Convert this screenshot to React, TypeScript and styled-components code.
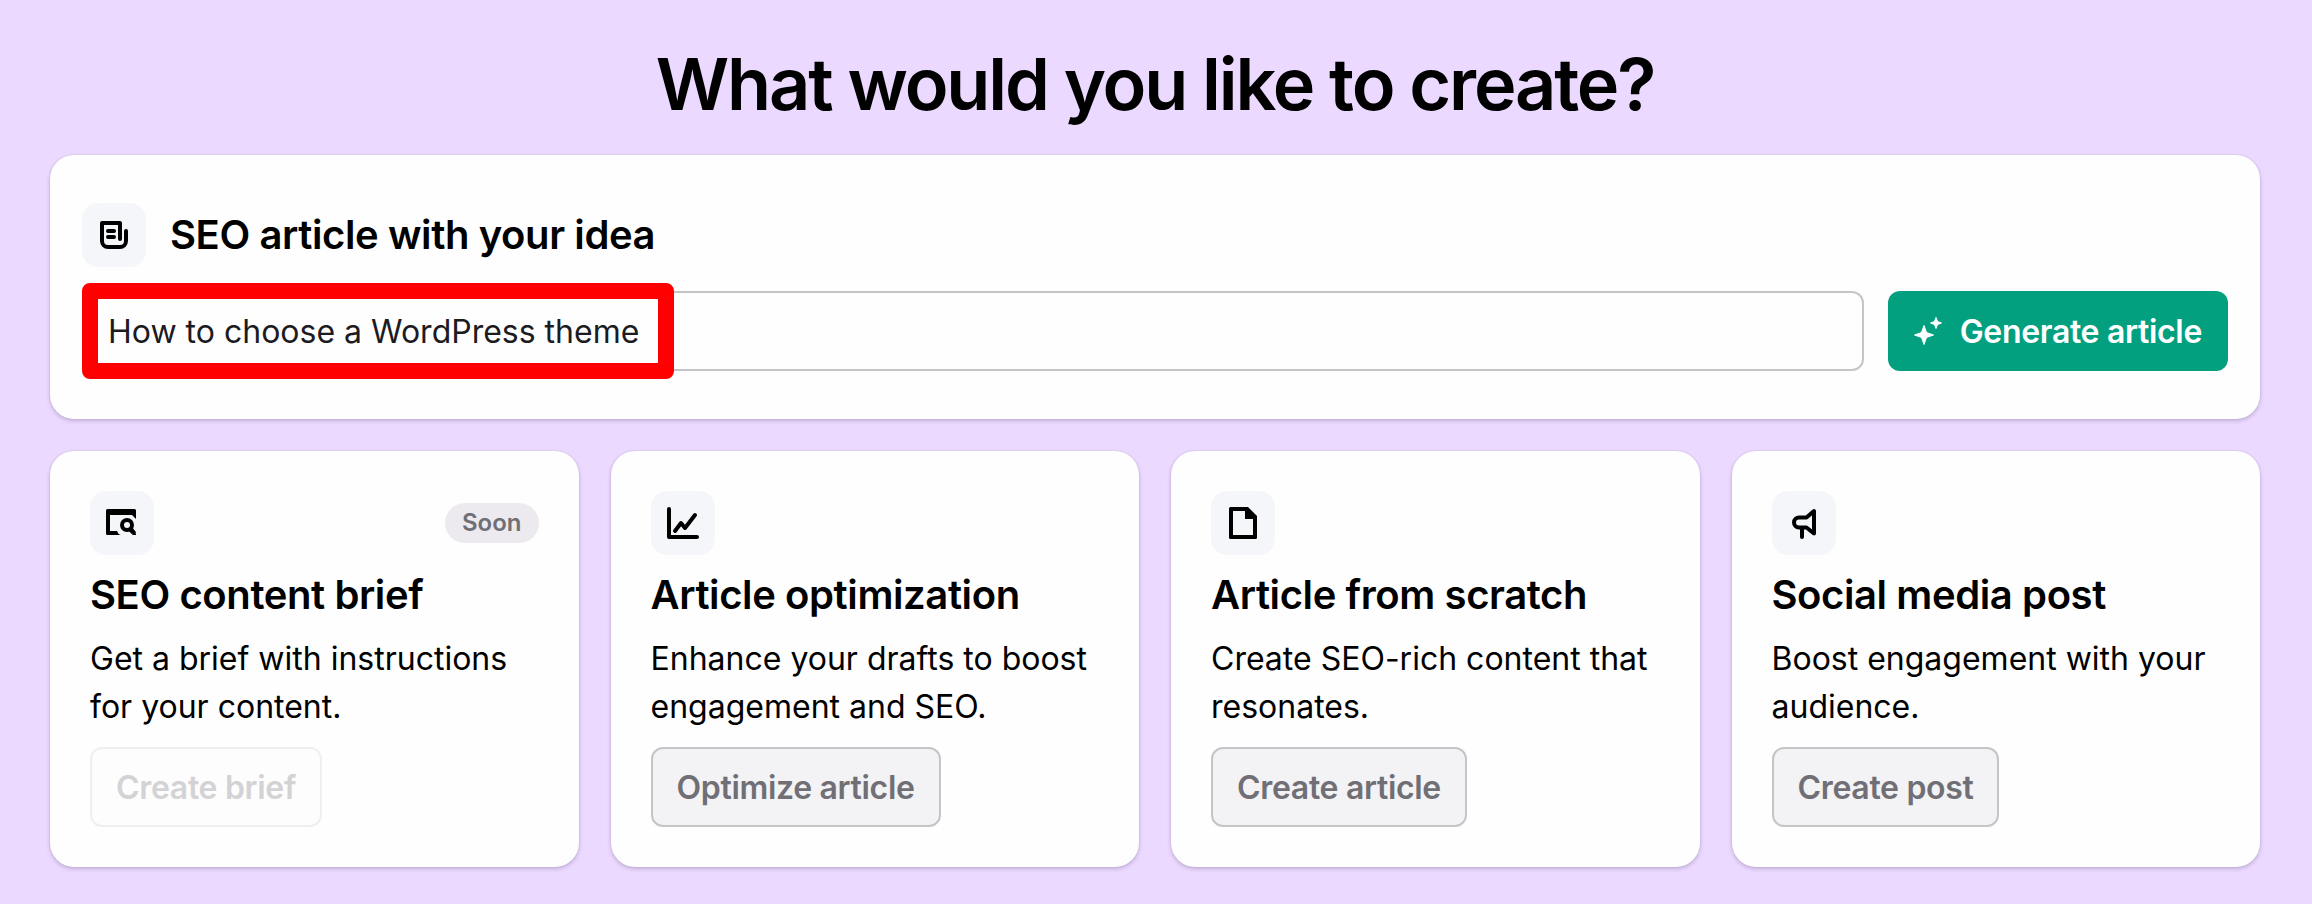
import React from "react";
import styled, { createGlobalStyle } from "styled-components";

const GlobalStyle = createGlobalStyle`
  * { box-sizing: border-box; }
  html { min-height: 100%; background: #ebd9ff; }
  body {
    margin: 0;
    background: #ebd9ff;
    color: #000;
    font-family: Inter, "Liberation Sans", sans-serif;
  }
  button, input { font: inherit; }
`;

const Page = styled.main`
  padding: 40px 52px 36px 50px;
`;

const Heading = styled.h1`
  margin: 0 0 27px;
  font-size: 72px;
  line-height: 88px;
  font-weight: 600;
  letter-spacing: -0.03em;
  text-align: center;
`;

const Card = styled.section`
  background: #fefefe;
  border-radius: 24px;
  box-shadow: 0 2px 4px rgba(40, 20, 60, 0.2), 0 0 2px rgba(40, 20, 60, 0.12);
`;

const IdeaCard = styled(Card)`
  padding: 48px 32px;
  display: flex;
  flex-direction: column;
  gap: 24px;
`;

const IdeaHeader = styled.div`
  display: flex;
  align-items: center;
  gap: 24px;
`;

const IconTile = styled.span`
  display: block;
  width: 64px;
  height: 64px;
  flex: none;
  border-radius: 16px;
  background: #f5f6fa;

  svg { display: block; }
`;

const CardTitle = styled.h2`
  margin: 0;
  font-size: 40px;
  line-height: 48px;
  font-weight: 600;
  letter-spacing: -0.01em;
`;

const IdeaForm = styled.form`
  display: flex;
  gap: 24px;
`;

const IdeaField = styled.div`
  position: relative;
  flex: 1;
`;

const IdeaInput = styled.input`
  display: block;
  width: 100%;
  height: 80px;
  padding: 0 24px;
  border: 2px solid #c5c5c8;
  border-radius: 12px;
  background: #fefefe;
  color: #1c1b1f;
  font-size: 32px;
  outline: none;
`;

const Highlight = styled.span`
  position: absolute;
  top: -8px;
  left: 0;
  width: 592px;
  height: 96px;
  border: 16px solid #ff0000;
  border-radius: 8px;
  pointer-events: none;
`;

const GenerateButton = styled.button`
  display: flex;
  align-items: center;
  gap: 16px;
  height: 80px;
  padding: 0 26px 0 24px;
  border: 0;
  border-radius: 12px;
  background: #02a07f;
  color: #fff;
  font-size: 32px;
  font-weight: 600;
  letter-spacing: -0.01em;
  white-space: nowrap;
`;

const Grid = styled.div`
  display: grid;
  grid-template-columns: repeat(auto-fit, minmax(480px, 1fr));
  gap: 32px;
  margin-top: 32px;
`;

const OptionCard = styled(Card)`
  padding: 40px;
  display: flex;
  flex-direction: column;
  align-items: flex-start;
  gap: 16px;
`;

const OptionTop = styled.div`
  align-self: stretch;
  display: flex;
  align-items: center;
  justify-content: space-between;
`;

const Badge = styled.span`
  padding: 0 17px;
  border-radius: 20px;
  background: #eceaee;
  color: #706f76;
  font-size: 24px;
  line-height: 40px;
  font-weight: 600;
`;

const Description = styled.p`
  margin: 0;
  font-size: 32px;
  line-height: 48px;
`;

const OptionButton = styled.button`
  height: 80px;
  padding: 0 24px;
  border: 2px solid #c5c5c8;
  border-radius: 12px;
  background: #f3f2f5;
  color: #706f76;
  font-size: 32px;
  font-weight: 600;
  letter-spacing: -0.01em;

  &:disabled {
    border-color: #efeef1;
    background: #fdfdfe;
    color: #d3d3d5;
  }
`;

const Glyph = ({ children }: { children: React.ReactNode }) => (
  <IconTile aria-hidden="true">
    <svg
      width="64"
      height="64"
      viewBox="0 0 64 64"
      fill="none"
      stroke="#000"
      strokeWidth="4"
      strokeLinecap="round"
      strokeLinejoin="round"
    >
      {children}
    </svg>
  </IconTile>
);

const ArticleIcon = () => (
  <Glyph>
    <path d="M38 36V20H20V38a6 6 0 0 0 6 6H38a6 6 0 0 0 6-6V28" />
    <path d="M26 28h6M26 34h6" />
  </Glyph>
);

const BriefIcon = () => (
  <Glyph>
    <path
      d="M17.5 18H44.5Q46 18 46 19.5V28L42 24H20V40H27Q28 43 30.5 44H17.5Q16 44 16 42.5V19.5Q16 18 17.5 18Z"
      fill="#000"
      stroke="none"
    />
    <circle cx="37" cy="34" r="5" />
    <path d="M41 38l3.6 4.4" strokeLinecap="butt" />
    <path d="M41 37.5L46 42.5V44H43L38.5 40Z" fill="#000" stroke="none" />
  </Glyph>
);

const ChartIcon = () => (
  <Glyph>
    <path d="M18 18V46H46" />
    <path d="M24 40l6-8 4 5 10-13" />
  </Glyph>
);

const DocumentIcon = () => (
  <Glyph>
    <path
      fillRule="evenodd"
      fill="#000"
      stroke="none"
      d="M19.5 16H37L46 25V46.5Q46 48 44.5 48H19.5Q18 48 18 46.5V17.5Q18 16 19.5 16ZM22 20V44H42V28H34V20Z"
    />
  </Glyph>
);

const MegaphoneIcon = () => (
  <Glyph>
    <path d="M42 20V42.500L34.5 36.5H27a5 5 0 0 1 0-10H34.5Z" />
    <path d="M30 37V46" />
  </Glyph>
);

const SparklesIcon = () => (
  <svg width="32" height="32" viewBox="0 0 32 32" fill="#fff" stroke="#fff" strokeLinejoin="round" aria-hidden="true">
    <path d="M12 10.5L14.5 17.5L21.5 20L14.5 22.5L12 29.5L9.5 22.5L2.5 20L9.5 17.5Z" />
    <path d="M24 2.5L25.5 6.5L29.5 8L25.5 9.5L24 13.5L22.5 9.5L18.5 8L22.5 6.5Z" />
  </svg>
);

const options = [
  {
    title: "SEO content brief",
    text: "Get a brief with instructions for your content.",
    action: "Create brief",
    Icon: BriefIcon,
    soon: true,
  },
  {
    title: "Article optimization",
    text: "Enhance your drafts to boost engagement and SEO.",
    action: "Optimize article",
    Icon: ChartIcon,
    soon: false,
  },
  {
    title: "Article from scratch",
    text: "Create SEO-rich content that resonates.",
    action: "Create article",
    Icon: DocumentIcon,
    soon: false,
  },
  {
    title: "Social media post",
    text: "Boost engagement with your audience.",
    action: "Create post",
    Icon: MegaphoneIcon,
    soon: false,
  },
];

export default function App() {
  return (
    <>
      <GlobalStyle />
      <Page>
        <Heading>What would you like to create?</Heading>
        <IdeaCard>
          <IdeaHeader>
            <ArticleIcon />
            <CardTitle>
              <label htmlFor="idea">SEO article with your idea</label>
            </CardTitle>
          </IdeaHeader>
          <IdeaForm onSubmit={(event) => event.preventDefault()}>
            <IdeaField>
              <IdeaInput id="idea" type="text" defaultValue="How to choose a WordPress theme" />
              <Highlight />
            </IdeaField>
            <GenerateButton type="submit">
              <SparklesIcon />
              Generate article
            </GenerateButton>
          </IdeaForm>
        </IdeaCard>
        <Grid>
          {options.map(({ title, text, action, Icon, soon }) => (
            <OptionCard key={title}>
              <OptionTop>
                <Icon />
                {soon && <Badge>Soon</Badge>}
              </OptionTop>
              <CardTitle>{title}</CardTitle>
              <Description>{text}</Description>
              <OptionButton type="button" disabled={soon}>
                {action}
              </OptionButton>
            </OptionCard>
          ))}
        </Grid>
      </Page>
    </>
  );
}
